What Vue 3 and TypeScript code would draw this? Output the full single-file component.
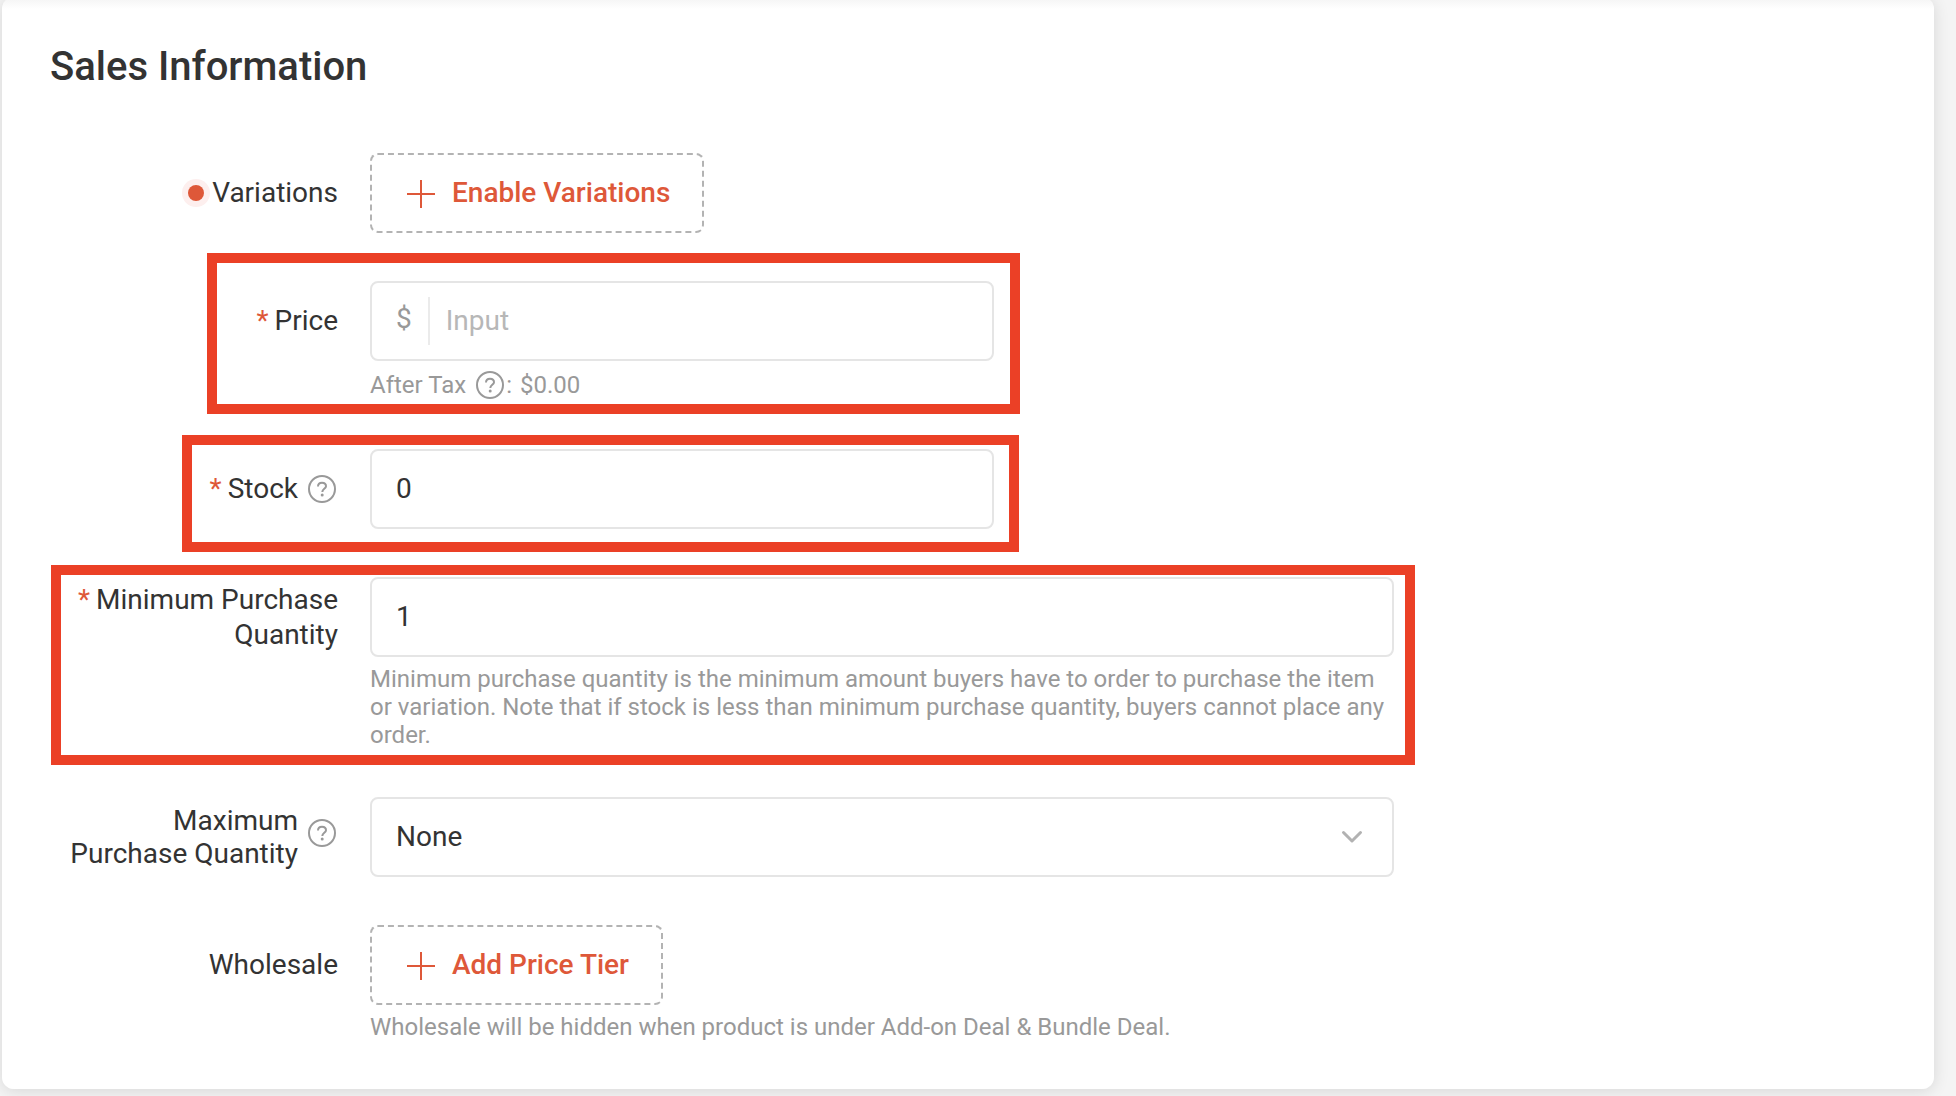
<script setup lang="ts">
import { ref } from 'vue'

const price = ref<string>('')
const stock = ref<string>('0')
const minQuantity = ref<string>('1')
const maxQuantity = ref<string>('None')
</script>

<template>
  <main class="page">
    <section class="card" aria-labelledby="sales-title">
      <h2 id="sales-title" class="title">Sales Information</h2>

      <form class="form" @submit.prevent>
        <div class="row">
          <div class="label">
            <svg class="dot" viewBox="0 0 28 28" aria-hidden="true">
              <circle cx="14" cy="14" r="14" fill="#fdefee" />
              <circle cx="14" cy="14" r="8" fill="#de5839" />
            </svg>
            <span>Variations</span>
          </div>
          <div class="control">
            <button type="button" class="dashed">
              <svg class="icon" viewBox="0 0 32 32" aria-hidden="true">
                <path d="M3 17H31M17 3V31" stroke="currentColor" stroke-width="2" fill="none" />
              </svg>
              <span>Enable Variations</span>
            </button>
          </div>
        </div>

        <div class="row marked marked-price">
          <label class="label" for="price"><span class="star">*</span><span>Price</span></label>
          <div class="control narrow">
            <div class="box">
              <span class="prefix">$</span>
              <input id="price" v-model="price" type="text" placeholder="Input" />
            </div>
            <p class="hint tax">
              <span>After Tax</span>
              <svg class="icon help" viewBox="0 0 32 32" aria-hidden="true">
                <circle cx="16" cy="16" r="13" />
                <path d="M12 13.4C12 11 13.700 9.700 16 9.700S20 11.100 20 13.200C20 15.800 16.300 15.900 16.300 19" />
                <circle class="point" cx="16.200" cy="22" r="1.500" />
              </svg>
              <span>:</span>
              <span class="amount">$0.00</span>
            </p>
          </div>
        </div>

        <div class="row marked marked-stock">
          <label class="label" for="stock">
            <span class="star">*</span><span>Stock</span>
            <svg class="icon help" viewBox="0 0 32 32" aria-hidden="true">
              <circle cx="16" cy="16" r="13" />
              <path d="M12 13.4C12 11 13.700 9.700 16 9.700S20 11.100 20 13.200C20 15.800 16.300 15.900 16.300 19" />
              <circle class="point" cx="16.200" cy="22" r="1.500" />
            </svg>
          </label>
          <div class="control narrow">
            <div class="box">
              <input id="stock" v-model="stock" type="text" />
            </div>
          </div>
        </div>

        <div class="row marked marked-minimum">
          <label class="label two-line" for="min-quantity">
            <span><span class="star">*</span>Minimum Purchase Quantity</span>
          </label>
          <div class="control">
            <div class="box">
              <input id="min-quantity" v-model="minQuantity" type="text" />
            </div>
            <p class="hint">
              Minimum purchase quantity is the minimum amount buyers have to order to purchase the item
              or variation. Note that if stock is less than minimum purchase quantity, buyers cannot
              place any order.
            </p>
          </div>
        </div>

        <div class="row">
          <label class="label with-help" for="max-quantity">
            <span>Maximum Purchase Quantity</span>
            <svg class="icon help" viewBox="0 0 32 32" aria-hidden="true">
              <circle cx="16" cy="16" r="13" />
              <path d="M12 13.4C12 11 13.700 9.700 16 9.700S20 11.100 20 13.200C20 15.800 16.300 15.900 16.300 19" />
              <circle class="point" cx="16.200" cy="22" r="1.500" />
            </svg>
          </label>
          <div class="control">
            <div class="box">
              <select id="max-quantity" v-model="maxQuantity">
                <option>None</option>
                <option>Per Order</option>
                <option>Per Time Period</option>
              </select>
              <svg class="chevron" viewBox="0 0 32 32" aria-hidden="true">
                <path d="M7.500 11.500L16 20L24.500 11.500" />
              </svg>
            </div>
          </div>
        </div>

        <div class="row">
          <div class="label"><span>Wholesale</span></div>
          <div class="control">
            <button type="button" class="dashed">
              <svg class="icon" viewBox="0 0 32 32" aria-hidden="true">
                <path d="M3 17H31M17 3V31" stroke="currentColor" stroke-width="2" fill="none" />
              </svg>
              <span>Add Price Tier</span>
            </button>
            <p class="hint">Wholesale will be hidden when product is under Add-on Deal &amp; Bundle Deal.</p>
          </div>
        </div>
      </form>
    </section>
  </main>
</template>

<style>
body {
  background: #f4f4f4;
}
</style>

<style scoped>
.page {
  display: flow-root;
  min-height: 100vh;
  box-sizing: border-box;
  overflow: hidden;
  font-family: Roboto, "Liberation Sans", sans-serif;
  font-size: 28px;
  line-height: 34px;
  color: #333;
}

.card {
  margin: -3px 22px 0 2px;
  padding: 48px;
  border-radius: 12px;
  background: linear-gradient(#f3f3f3, #fff 12px);
  box-shadow: 0 2px 16px rgba(0, 0, 0, 0.12);
}

.title {
  margin: 0 0 64px;
  font-size: 40px;
  line-height: 44px;
  font-weight: 500;
}

.form {
  display: flex;
  flex-direction: column;
  align-items: flex-start;
  gap: 48px;
}

.row {
  position: relative;
  display: flex;
  align-items: flex-start;
  gap: 32px;
  max-width: 100%;
}

.label {
  flex: none;
  display: flex;
  align-items: center;
  justify-content: flex-end;
  width: 288px;
  height: 80px;
  text-align: right;
}

.two-line {
  box-sizing: border-box;
  padding-left: 16px;
  line-height: 35px;
}

.with-help {
  line-height: 33px;
}

.star {
  margin-right: 6px;
  color: #de5839;
}

.dot {
  width: 28px;
  height: 28px;
  margin-right: 2px;
}

.icon {
  flex: none;
  width: 32px;
  height: 32px;
}

.help {
  margin-left: 8px;
  fill: none;
  stroke: #999;
  stroke-width: 2;
}

.help .point {
  fill: #999;
  stroke: none;
}

.with-help .help {
  margin-bottom: 8px;
}

.control {
  width: 1024px;
  min-width: 0;
}

.narrow {
  width: 624px;
}

.box {
  position: relative;
  display: flex;
  align-items: center;
  box-sizing: border-box;
  height: 80px;
  border: 2px solid #e5e5e5;
  border-radius: 8px;
  background: #fff;
}

.box input,
.box select {
  flex: 1;
  min-width: 0;
  box-sizing: border-box;
  height: 100%;
  padding: 0 24px;
  border: 0;
  outline: 0;
  background: transparent;
  color: inherit;
  font: inherit;
  appearance: none;
}

.box input {
  padding-bottom: 2px;
}

.prefix {
  flex: none;
  height: 48px;
  padding: 0 16px 0 24px;
  border-right: 2px solid #ebebeb;
  line-height: 44px;
  color: #999;
}

.box .prefix + input {
  padding-left: 16px;
}

input::placeholder {
  color: #b7b7b7;
  opacity: 1;
}

.chevron {
  position: absolute;
  top: 22px;
  right: 24px;
  width: 32px;
  height: 32px;
  pointer-events: none;
  fill: none;
  stroke: #b2b2b2;
  stroke-width: 3;
  stroke-linecap: round;
  stroke-linejoin: round;
}

.dashed {
  display: flex;
  align-items: center;
  gap: 16px;
  height: 80px;
  padding: 0 32px;
  border: 2px dashed #b3b3b3;
  border-radius: 8px;
  background: #fff;
  color: #de5839;
  font: inherit;
  font-weight: 500;
  cursor: pointer;
}

.hint {
  margin: 8px 0 0;
  font-size: 24px;
  line-height: 28px;
  color: #999;
}

.tax {
  display: flex;
  align-items: center;
  height: 32px;
}

.amount {
  margin-left: 8px;
}

.marked::after {
  content: "";
  position: absolute;
  border: 10px solid #eb4026;
  pointer-events: none;
}

.marked-price::after {
  inset: -28px -26px -13px 157px;
}

.marked-stock::after {
  inset: -14px -25px -23px 132px;
}

.marked-minimum::after {
  inset: -12px -21px -16px 1px;
}
</style>
